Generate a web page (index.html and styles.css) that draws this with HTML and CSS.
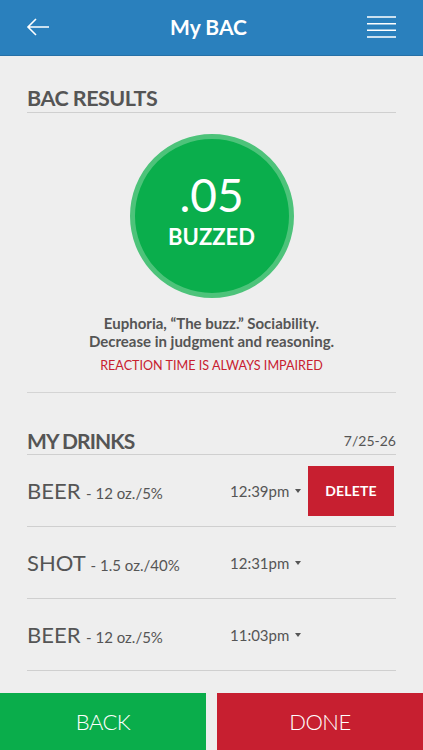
FILE: index.html
```html
<!DOCTYPE html>
<html>
<head>
<meta charset="utf-8">
<link rel="stylesheet" href="styles.css">
</head>
<body>
<div class="app">
  <header class="topbar">
    <svg class="icon-back" width="24" height="20" viewBox="0 0 24 20">
      <path d="M23 10H2M10 2L2 10l8 8" fill="none" stroke="#fff" stroke-width="1.6"/>
    </svg>
    <h1 class="title">My BAC</h1>
    <svg class="icon-menu" width="29" height="22" viewBox="0 0 29 22">
      <path d="M0 1h29M0 7.7h29M0 14.3h29M0 21h29" fill="none" stroke="#fff" stroke-width="1.5"/>
    </svg>
  </header>

  <main class="content">
    <h2 class="section-title">BAC RESULTS</h2>
    <div class="result">
      <div class="bac-circle">
        <div class="bac-value">.05</div>
        <div class="bac-label">BUZZED</div>
      </div>
      <p class="desc">Euphoria, “The buzz.” Sociability.<br>Decrease in judgment and reasoning.</p>
      <p class="warning">REACTION TIME IS ALWAYS IMPAIRED</p>
    </div>

    <div class="section-head">
      <h2 class="section-title-inline">MY DRINKS</h2>
      <span class="date">7/25-26</span>
    </div>
    <ul class="drinks">
      <li class="drink">
        <span class="drink-name">BEER <span class="drink-detail">- 12 oz./5%</span></span>
        <span class="drink-time">12:39pm <i class="caret"></i></span>
        <button class="delete">DELETE</button>
      </li>
      <li class="drink">
        <span class="drink-name">SHOT <span class="drink-detail">- 1.5 oz./40%</span></span>
        <span class="drink-time">12:31pm <i class="caret"></i></span>
        <span class="spacer"></span>
      </li>
      <li class="drink">
        <span class="drink-name">BEER <span class="drink-detail">- 12 oz./5%</span></span>
        <span class="drink-time">11:03pm <i class="caret"></i></span>
        <span class="spacer"></span>
      </li>
    </ul>
  </main>

  <footer class="actions">
    <button class="btn btn-back">BACK</button>
    <button class="btn btn-done">DONE</button>
  </footer>
</div>
</body>
</html>
```

FILE: styles.css
```css
* { box-sizing: border-box; }
html, body { margin: 0; padding: 0; }
body {
  background: #eeeeee;
  font-family: Lato, "Open Sans", sans-serif;
  color: #555555;
}
.app {
  min-height: 750px;
  display: flex;
  flex-direction: column;
}
.topbar {
  height: 56px;
  background: #2a80bd;
  border-bottom: 1px solid #2670a6;
  display: flex;
  align-items: center;
  justify-content: space-between;
  padding: 0 27px 2px 26px;
}
.title {
  margin: 0;
  color: #fff;
  font-size: 21px;
  font-weight: 700;
}
.icon-back, .icon-menu { display: block; }
.content {
  padding: 0 27px;
}
.section-title {
  margin: 28px 0 0;
  height: 29px;
  line-height: 28px;
  font-size: 21.5px;
  letter-spacing: -0.5px;
  font-weight: 700;
  color: #555;
  border-bottom: 1px solid #cfcfcf;
}
.result {
  display: flex;
  flex-direction: column;
  align-items: center;
  border-bottom: 1px solid #d4d4d4;
  padding-bottom: 18px;
}
.bac-circle {
  margin-top: 21px;
  width: 164px;
  height: 164px;
  border-radius: 50%;
  background: #0aae4c;
  border: 5px solid #4dc37a;
  display: flex;
  flex-direction: column;
  align-items: center;
  justify-content: center;
  color: #fff;
}
.bac-value {
  font-size: 46px;
  line-height: 50px;
  margin-top: -12px;
}
.bac-label {
  font-size: 22px;
  font-weight: 700;
  line-height: 28px;
  margin-top: 3px;
}
.desc {
  margin: 16px 0 0;
  font-size: 15px;
  line-height: 18px;
  font-weight: 700;
  text-align: center;
  color: #555;
}
.warning {
  margin: 8px 0 0;
  font-size: 12.6px;
  line-height: 16px;
  color: #c8202f;
}
.section-head {
  margin-top: 33px;
  height: 29px;
  display: flex;
  justify-content: space-between;
  align-items: center;
  border-bottom: 1px solid #cfcfcf;
}
.section-title-inline {
  margin: 0;
  font-size: 21px;
  letter-spacing: -0.9px;
  font-weight: 700;
  color: #555;
}
.date {
  font-size: 14px;
  color: #555;
}
.drinks {
  list-style: none;
  margin: 0;
  padding: 0;
}
.drink {
  height: 72px;
  display: flex;
  align-items: center;
  border-bottom: 1px solid #cfcfcf;
}
.drink-name {
  font-size: 22px;
  color: #555;
  width: 203px;
}
.drink-detail {
  font-size: 15px;
}
.drink-time {
  font-size: 15px;
  color: #555;
  display: flex;
  align-items: center;
  gap: 6px;
}
.caret {
  display: inline-block;
  width: 0;
  height: 0;
  border-left: 3.5px solid transparent;
  border-right: 3.5px solid transparent;
  border-top: 4px solid #555;
}
.delete, .spacer {
  margin-left: auto;
  margin-right: 2px;
  width: 86px;
  height: 50px;
}
.delete {
  border: none;
  background: #c71f30;
  color: #fff;
  font-family: inherit;
  font-size: 14px;
  font-weight: 700;
  letter-spacing: 0.2px;
}
.actions {
  margin-top: auto;
  display: flex;
  gap: 11px;
  height: 57px;
}
.btn {
  flex: 1;
  border: none;
  color: #fff;
  font-family: inherit;
  font-size: 22px;
  font-weight: 300;
  letter-spacing: -0.5px;
}
.btn-back { background: #0aad4b; }
.btn-done { background: #c71f30; }
```
